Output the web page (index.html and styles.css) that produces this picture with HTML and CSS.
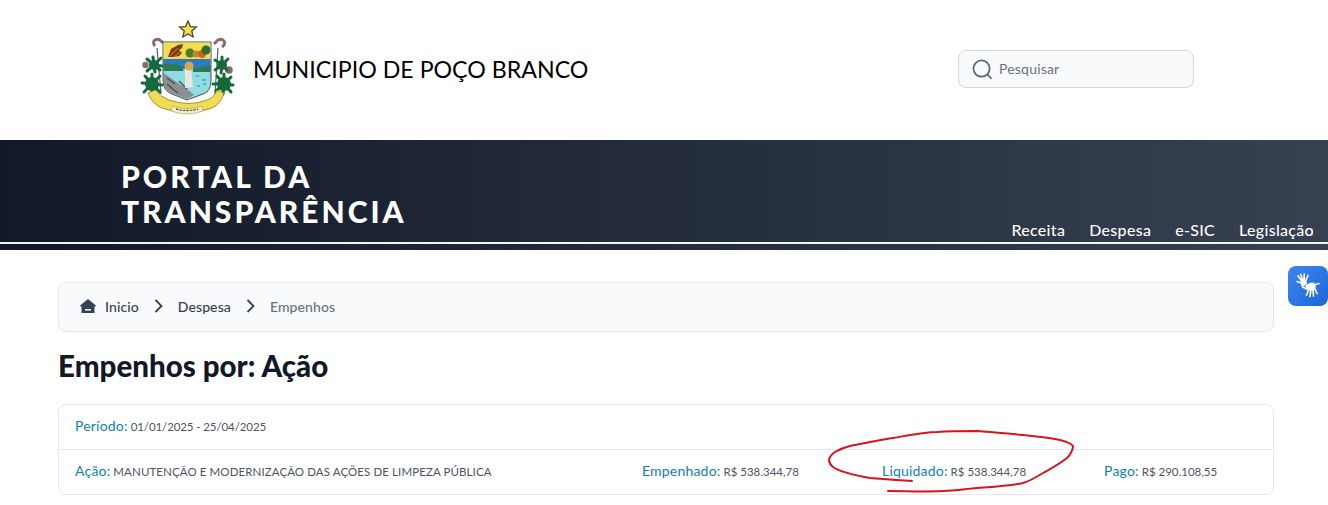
FILE: index.html
```html
<!DOCTYPE html>
<html lang="pt-BR">
<head>
<meta charset="utf-8">
<title>Portal da Transparência</title>
<link rel="stylesheet" href="styles.css">
</head>
<body>
<header class="top">
  <svg class="logo" viewBox="20 -10 96 140" aria-hidden="true">
    <path d="M68 11l2.400 5.600 6 .5-4.600 4 1.400 5.900-5.200-3.100-5.200 3.100 1.400-5.900-4.600-4 6-.5z" fill="#f4dc55" stroke="#4b4a2c" stroke-width="1.300"/>
    <path d="M35 36q-3-4 0-6t6 1l4 3m49 0l4-4q4-2 6 1t-2 6" fill="none" stroke="#8a6a70" stroke-width="3"/>
    <path d="M37 38l4 46m57-46l-3 46" fill="none" stroke="#3d6a7a" stroke-width="1.200"/>
    <path d="M43 32h48v38q0 12-8 14l-16 6-15-6q-9-3-9-14z" fill="#8fdde2" stroke="#4a4f5c" stroke-width="1"/>
    <path d="M43.500 32.500h47V49h-47z" fill="#f2dc50"/>
    <path d="M43.500 49h47v10H43.500z" fill="#2a7bc4"/>
    <path d="M43.500 54q12-1 19 3l1 4H43.500z" fill="#2f7a50"/>
    <path d="M73 59l17.500-4v7H73z" fill="#2f7a50"/>
    <path d="M43.500 63L68 80l6 5-7 4-15-6q-8.500-3-8.500-13z" fill="#8d8f8e"/>
    <path d="M47 68l8 6m-5 3l8 6m1-12l8 8M47 74l5 4" stroke="#4c4f50" stroke-width="1.400"/>
    <path d="M65 58h6l2 19-8 1z" fill="#e6e8de"/>
    <circle cx="69" cy="56" r="4.500" fill="#d9a64b"/>
    <path d="M76 66h3m3 4h4m-9 6h3m3-2h3" stroke="#3f8c98" stroke-width="1.200"/>
    <path d="M48 47l3-8 7-4 5-1-1 4-3 2 3 3-3 3-5 1z" fill="#7d3d14"/>
    <path d="M50 46l8-8m-4 9l7-6" stroke="#d08a22"/>
    <circle cx="70" cy="43" r="4.500" fill="#4d7a2b"/>
    <circle cx="76" cy="44" r="3.500" fill="#b98a2b"/>
    <circle cx="82" cy="44" r="4" fill="#c76a1c"/>
    <circle cx="86" cy="40" r="4.500" fill="#2f6b33"/>
    <circle cx="25.500" cy="55" r="3.200" fill="#8a6a70"/>
    <circle cx="109" cy="60" r="3.800" fill="#8a6a70"/>
    <circle cx="34" cy="55" r="5" fill="#156a3a"/>
    <circle cx="32" cy="74" r="7" fill="#156a3a"/>
    <circle cx="102" cy="55" r="5" fill="#156a3a"/>
    <circle cx="104" cy="74" r="7" fill="#156a3a"/>
    <g class="palm">
      <path d="M34 55l-7-6m7 6l-1-8m1 8l7-7m-7 7l8 1m-8-1l-7 6m7-6l1 7m-1-7l6 5"/>
      <path d="M32 74l-10-1m10 1l-7-8m7 8l0-10m0 10l8-8m-8 8l10 1m-10-1l-8 8m8-8l0 11m0-11l8 8"/>
      <path d="M102 55l-7-5m7 5l0-8m0 8l6-6m-6 6l5 5m-5-5l-1 8m1-8l-7 5"/>
      <path d="M104 74l-11 0m11 0l-7-8m7 8l0-10m0 10l7-7m-7 7l9 1m-9-1l7 8m-7-8l-1 10m1-10l-8 7"/>
    </g>
    <path d="M28 83q4 11 14 15 25 9 50 0 9-4 12-15l-7-3q-3 8-10 10-18 7-38 0-8-3-14-10z" fill="#f1dd4f" stroke="#6f6c2a" stroke-width=".7"/>
    <path d="M52 96q15 5 30 0l1 5q-16 6-32 0z" fill="#f6f0c0" stroke="#8a8660" stroke-width=".5"/>
    <path d="M56 99q11 3 22 0" fill="none" stroke="#555" stroke-width="1.300" stroke-dasharray="2.500 1"/>
  </svg>
  <h2 class="city">MUNICIPIO DE POÇO BRANCO</h2>
  <label class="search">
    <svg class="search-icon" viewBox="0 0 22 22" aria-hidden="true"><circle cx="10" cy="10" r="8.500"/><path d="M16 16.200l4.500 4.500"/></svg>
    <span class="search-text">Pesquisar</span>
  </label>
</header>

<section class="band">
  <div class="band-main">
    <h1 class="portal">PORTAL DA<br>TRANSPARÊNCIA</h1>
    <nav class="menu">
      <a>Receita</a><a>Despesa</a><a>e-SIC</a><a>Legislação</a>
    </nav>
  </div>
</section>

<button class="vlibras" aria-label="Acessibilidade">
  <svg viewBox="0 0 24 24" aria-hidden="true">
    <g class="hand-lines">
      <path d="M6.500 8L2 2M7 7.500L4.800.5M8 7.500L8.300 0M9 8l3-6.500"/>
      <path d="M5.500 9L1 7.500M6 9l.5 4 4 2"/>
      <path d="M13 15l-2.500 6M15 15l-1 7.500M17 15l.5 7M18.500 14l2.500 5.500M18 11l5-1.500"/>
    </g>
    <path d="M4.500 6.500l6-.500 .5 4-4 2.500-2-1.500z" fill="#fff"/>
    <path d="M9 12q4-4 9-3.500l2 4.500-2 3-6 .5-2-2.500z" fill="#fff"/>
  </svg>
</button>

<main class="content">
  <nav class="crumbs">
    <svg class="home" viewBox="0 0 16 14" aria-hidden="true"><path fill-rule="evenodd" d="M8 0l8 6.500-1 1.200-.5-.4V14h-13V7.300l-.5.400L0 6.500zM5 10v1.500h6V10z"/></svg>
    <a class="crumb">Inicio</a>
    <svg class="chev" viewBox="0 0 8 14" aria-hidden="true"><path d="M1 1l6 6-6 6"/></svg>
    <a class="crumb">Despesa</a>
    <svg class="chev" viewBox="0 0 8 14" aria-hidden="true"><path d="M1 1l6 6-6 6"/></svg>
    <span class="crumb current">Empenhos</span>
  </nav>
  <h1 class="page-title">Empenhos por: Ação</h1>
  <div class="card">
    <div class="row"><span class="item"><b>Período:</b> <span class="num">01/01/2025 - 25/04/2025</span></span></div>
    <div class="row row-split">
      <span class="item"><b>Ação:</b> <span class="caps">MANUTENÇÃO E MODERNIZAÇÃO DAS AÇÕES DE LIMPEZA PÚBLICA</span></span>
      <span class="item"><b>Empenhado:</b> R$ 538.344,78</span>
      <span class="item"><b>Liquidado:</b> R$ 538.344,78</span>
      <span class="item"><b>Pago:</b> R$ 290.108,55</span>
    </div>
  </div>
</main>

<svg class="scribble" viewBox="820 425 260 75" aria-hidden="true">
  <path d="M912 481C895 480 883 479 870 478C853 475 840 472 833 467C827 462 828 457 835 452C842 448 846 447 850 446C870 442 880 440 893 438C910 435 925 432 937 432C950 431 965 431 977 431C995 432 1010 434 1023 435C1040 437 1052 438 1060 440C1068 442 1073 444 1073 447C1072 452 1070 455 1067 458C1058 465 1050 469 1043 473C1035 478 1030 481 1023 483C1010 486 990 487 977 488C965 489 955 491 943 491C925 492 905 491 888 491"/>
</svg>
</body>
</html>
```
FILE: styles.css
```css
* { box-sizing: border-box; }
html, body { margin: 0; }
body {
  position: relative;
  height: 505px;
  overflow: hidden;
  background: #fff;
  color: #111827;
  font-family: "Lato", "Noto Sans", sans-serif;
}
.top {
  display: flex;
  align-items: center;
  height: 140px;
  padding: 0 0 2px 140px;
}
.logo {
  align-self: flex-start;
  width: 96px;
  height: 140px;
  flex: none;
  filter: blur(.4px);
}
.palm { fill: none; stroke: #156a3a; stroke-width: 3; stroke-linecap: round; }
.city {
  margin: 0 0 0 17px;
  width: 705px;
  font-size: 23.200px;
  font-weight: 400;
  color: #000;
  white-space: nowrap;
}
.search {
  display: flex;
  align-items: center;
  gap: 6px;
  width: 236px;
  height: 38px;
  padding-left: 13px;
  background: #f9fafb;
  border: 1px solid #d1d5db;
  border-radius: 8px;
  color: #6b7280;
  font-size: 14px;
  letter-spacing: .2px;
}
.search-text { margin-bottom: 2px; }
.search-icon { width: 21px; height: 21px; fill: none; stroke: #5b6472; stroke-width: 1.800; }
.band {
  height: 110px;
  background: linear-gradient(90deg, #111827, #374151);
}
.band-main {
  display: flex;
  justify-content: space-between;
  align-items: flex-end;
  height: 104px;
  padding: 19px 14px 0 121px;
  border-bottom: 2px solid #f3f4f6;
}
.portal {
  margin: 0;
  align-self: flex-start;
  color: #fff;
  font-size: 30px;
  line-height: 35px;
  font-weight: 900;
  letter-spacing: 3px;
}
.menu { display: flex; gap: 24px; }
.menu a {
  color: #f9fafb;
  font-size: 16px;
  line-height: 24px;
  font-weight: 500;
  letter-spacing: .3px;
}
.vlibras {
  position: absolute;
  top: 266px;
  right: 0;
  width: 40px;
  height: 40px;
  padding: 8px;
  border: 0;
  border-radius: 8px;
  background: linear-gradient(135deg, #3b87f0, #1f66d8);
}
.vlibras svg { display: block; width: 24px; height: 24px; overflow: visible; }
.hand-lines { fill: none; stroke: #fff; stroke-width: 1.700; stroke-linecap: round; }
.content { padding: 32px 54px 0 58px; }
.crumbs {
  display: flex;
  align-items: center;
  height: 50px;
  padding: 0 0 2px 21px;
  background: #f9fafb;
  border: 1px solid #e5e7eb;
  border-radius: 8px;
  font-size: 14px;
  font-weight: 500;
  color: #374151;
}
.home { width: 16px; height: 14px; margin-right: 9px; fill: #374151; }
.chev { width: 9px; height: 14px; margin: 0 15px; fill: none; stroke: #374151; stroke-width: 1.800; }
.crumb { letter-spacing: .1px; }
.current { color: #6b7280; }
.page-title {
  margin: 16px 0 20px;
  font-size: 29.500px;
  line-height: 36px;
  font-weight: 900;
  color: #111827;
}
.card {
  border: 1px solid #e5e7eb;
  border-radius: 8px;
  font-size: 11.500px;
  color: #4b5563;
}
.row {
  display: flex;
  align-items: center;
  height: 44px;
  padding: 0 0 4px 16px;
}
.row-split {
  display: grid;
  grid-template-columns: 567px 240px 222px 1fr;
  height: 45px;
  border-top: 1px solid #e5e7eb;
}
.item { white-space: nowrap; }
.item b { font-size: 14px; font-weight: 400; letter-spacing: .2px; color: #0f7fb8; }
.num { letter-spacing: -.1px; }
.caps { letter-spacing: .1px; }
.scribble {
  position: absolute;
  left: 820px;
  top: 425px;
  width: 260px;
  height: 75px;
  fill: none;
  stroke: #d8141c;
  stroke-width: 2;
  stroke-linecap: round;
}
```
